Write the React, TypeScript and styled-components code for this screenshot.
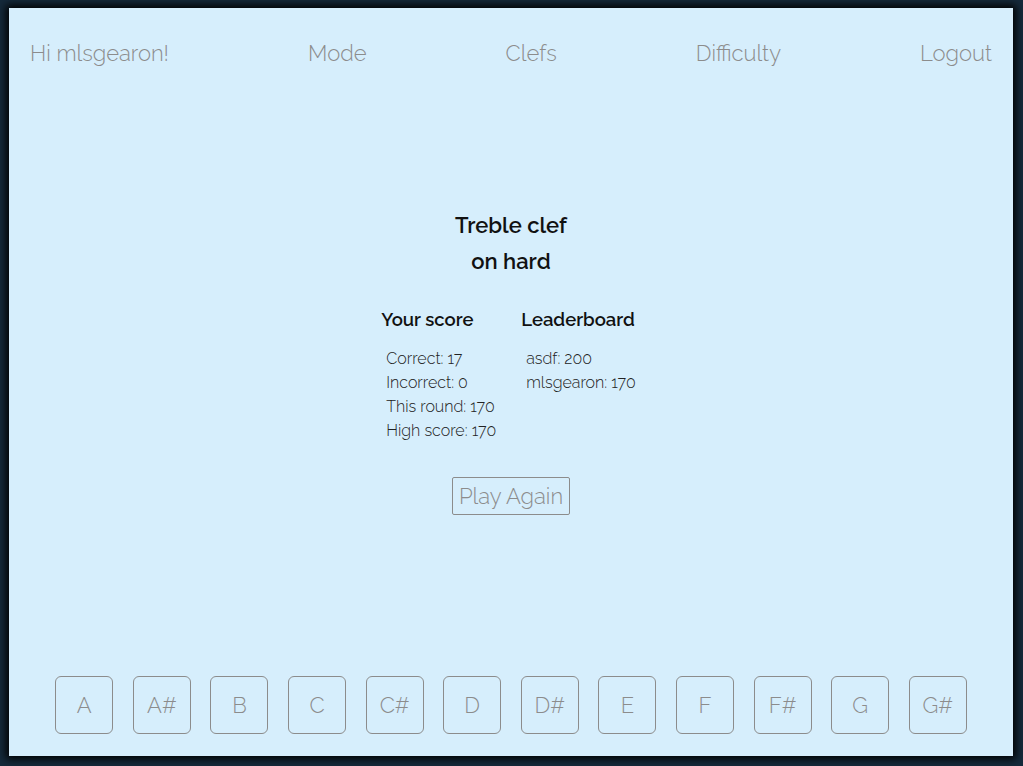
import styled, {createGlobalStyle} from "styled-components"

const GlobalStyle = createGlobalStyle`
    html, body {
        margin: 0;
        padding: 0;
        background: #152a3b;
    }
    body {
        padding: 8px 10px 10px 9px;
        font-family: Raleway, Lato, "Open Sans", sans-serif;
    }
`

const Panel = styled.div`
    height: 748px;
    background-color: #d6eefc;
    box-shadow: 0 0 8px 3px #000;
    display: flex;
    flex-direction: column;
`
const Nav = styled.nav`
    display: flex;
    justify-content: space-between;
    align-items: center;
    padding: 32px 21px 0;
`
const NavItem = styled.span`
    font-size: 22px;
    font-weight: 300;
    color: #8c8c8c;
    cursor: pointer;
`
const Main = styled.main`
    flex: 1;
    display: flex;
    flex-direction: column;
    align-items: center;
    padding-top: 141px;
`
const Title = styled.h2`
    margin: 0;
    font-size: 22px;
    font-weight: 600;
    line-height: 36px;
    color: #111;
    text-align: center;
`
const Columns = styled.div`
    display: flex;
    gap: 25px;
    margin: 30px 5px 0 0;
`
const Column = styled.div`
    display: flex;
    flex-direction: column;
`
const ColHead = styled.h3`
    margin: 0 0 17px;
    font-size: 18.5px;
    font-weight: 600;
    color: #111;
`
const List = styled.ul`
    list-style: none;
    margin: 0;
    padding: 0 0 0 5px;
`
const Item = styled.li`
    font-size: 16px;
    font-weight: 300;
    line-height: 24px;
    color: #222;
`
const PlayButton = styled.button`
    margin-top: 34px;
    background: transparent;
    border: 1px solid #8c8c8c;
    border-radius: 2px;
    font-family: inherit;
    font-size: 22px;
    font-weight: 300;
    color: #8c8c8c;
    padding: 5px 6px;
    cursor: pointer;
`
const Keys = styled.div`
    display: flex;
    justify-content: center;
    gap: 19.6px;
    padding-bottom: 22px;
`
const Key = styled.button`
    width: 58px;
    height: 58px;
    background: transparent;
    border: 1px solid #8c8c8c;
    border-radius: 6px;
    font-family: inherit;
    font-size: 22px;
    font-weight: 300;
    color: #8c8c8c;
    cursor: pointer;
`

const notes = ["A", "A#", "B", "C", "C#", "D", "D#", "E", "F", "F#", "G", "G#"]

const App = () => {
    return (
        <>
            <GlobalStyle />
            <Panel>
                <Nav>
                    <NavItem>Hi mlsgearon!</NavItem>
                    <NavItem>Mode</NavItem>
                    <NavItem>Clefs</NavItem>
                    <NavItem>Difficulty</NavItem>
                    <NavItem>Logout</NavItem>
                </Nav>
                <Main>
                    <Title>Treble clef</Title>
                    <Title>on hard</Title>
                    <Columns>
                        <Column>
                            <ColHead>Your score</ColHead>
                            <List>
                                <Item>Correct: 17</Item>
                                <Item>Incorrect: 0</Item>
                                <Item>This round: 170</Item>
                                <Item>High score: 170</Item>
                            </List>
                        </Column>
                        <Column>
                            <ColHead>Leaderboard</ColHead>
                            <List>
                                <Item>asdf: 200</Item>
                                <Item>mlsgearon: 170</Item>
                            </List>
                        </Column>
                    </Columns>
                    <PlayButton>Play Again</PlayButton>
                </Main>
                <Keys>
                    {notes.map(n => <Key key={n}>{n}</Key>)}
                </Keys>
            </Panel>
        </>
    )
}

export default App
